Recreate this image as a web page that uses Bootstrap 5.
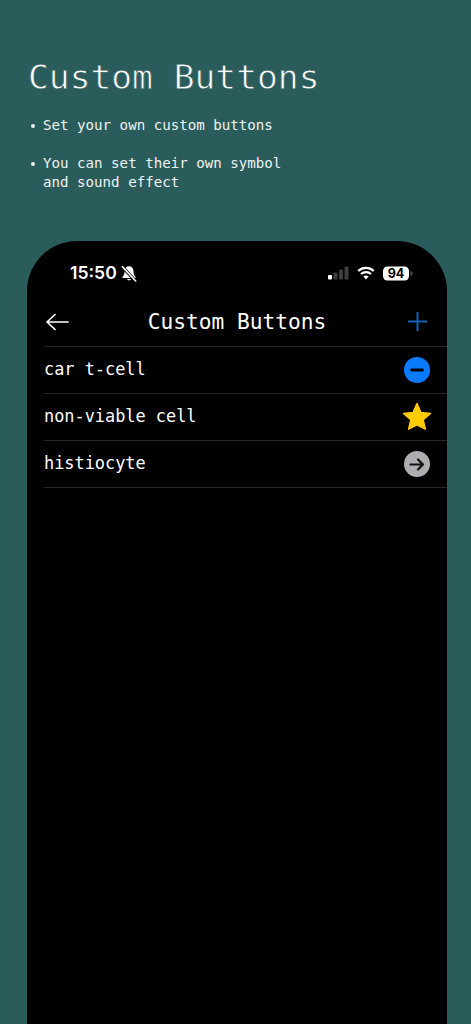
<!DOCTYPE html>
<html lang="en">
<head>
  <meta charset="UTF-8" />
  <title>Custom Buttons</title>
  <link href="https://cdn.jsdelivr.net/npm/bootstrap@5.3.0/dist/css/bootstrap.min.css" rel="stylesheet" />
  <style>
    html, body { height: 1024px; overflow: hidden; }
    body { background: #2b5c5c; color: #fff; font-family: "DejaVu Sans Mono", "Liberation Mono", monospace; }
    .intro { height: 241px; padding: 55px 0 0 28px; }
    .intro-title { font-size: 34.6px; line-height: 44px; font-weight: 400; margin: 0 0 17px; font-family: "DejaVu Sans Mono", monospace; -webkit-text-stroke: 0.8px #2b5c5c; color: #fff; }
    .bullets { list-style: none; margin: 0; padding: 0 0 0 15px; font-size: 14.15px; line-height: 19px; color: #eef3f3; }
    .bullets li { position: relative; margin-bottom: 19px; }
    .bullets li::before { content: ""; position: absolute; left: -12px; top: 8px; width: 4px; height: 4px; border-radius: 50%; background: #eef3f3; }
    .phone { margin: 0 24px 0 27px; height: 783px; background: #000; border-radius: 50px 50px 0 0; }
    .status { height: 58px; padding: 21px 34px 15px 43px; }
    .clock { font-family: Inter, "Liberation Sans", sans-serif; font-weight: 600; font-size: 17.6px; line-height: 22px; }
    .app-bar { height: 47px; padding: 0 20px 2px 19px; }
    .app-title { font-size: 21.2px; line-height: 32px; margin-right: 3px; }
    .rows { margin-left: 17px; border-top: 1px solid #222; }
    .cell-row { height: 47px; padding: 0 17px 1px 0; border-bottom: 1px solid #262626; font-size: 16.9px; }
    .cell-row svg, .app-bar svg, .status svg { display: block; flex: none; }
    .star-icon { margin-right: -2px; }
  </style>
</head>
<body>
  <section class="intro">
    <h1 class="intro-title">Custom Buttons</h1>
    <ul class="bullets">
      <li>Set your own custom buttons</li>
      <li>You can set their own symbol<br />and sound effect</li>
    </ul>
  </section>

  <main class="phone">
    <div class="status d-flex justify-content-between align-items-center">
      <div class="d-flex align-items-center gap-1">
        <span class="clock">15:50</span>
        <svg width="16" height="17" viewBox="0 0 15 16">
          <path d="M7.5 1.2c-2.6 0-4.2 2-4.2 4.4 0 2.6-.6 4.2-2 5.6v1h12.4v-1c-1.4-1.4-2-3-2-5.6 0-2.4-1.600-4.400-4.200-4.400z" fill="#fff"/>
          <path d="M5.600 13.200a2 2 0 0 0 3.800 0z" fill="#fff"/>
          <path d="M1 1.500l12.500 13.500" stroke="#000" stroke-width="3"/>
          <path d="M1.200 1.500l12.600 13.500" stroke="#fff" stroke-width="1.500" stroke-linecap="round"/>
        </svg>
      </div>
      <div class="d-flex align-items-center gap-2">
        <svg width="22" height="14" viewBox="0 0 22 14">
          <rect x="1" y="9" width="4" height="4.500" rx="1" fill="#fff"/>
          <rect x="6.500" y="6.500" width="4" height="7" rx="1" fill="#3d3d3d"/>
          <rect x="12" y="3.500" width="4" height="10" rx="1" fill="#3d3d3d"/>
          <rect x="17.500" y="0.500" width="4" height="13" rx="1" fill="#3d3d3d"/>
        </svg>
        <svg width="18" height="14" viewBox="0 0 18 14" fill="none" stroke="#fff" stroke-width="2.300">
          <path d="M1.200 5a11.500 11.500 0 0 1 15.600 0"/>
          <path d="M4 8a7.500 7.500 0 0 1 10 0"/>
          <path d="M9 13.500l-2.600-2.900a3.800 3.800 0 0 1 5.200 0z" fill="#fff" stroke="none"/>
        </svg>
        <svg width="30" height="15" viewBox="0 0 30 15">
          <rect x="0" y="0.500" width="26" height="14" rx="4.500" fill="#fff"/>
          <path d="M27.500 5.200c1.200.3 2 1.200 2 2.300s-.8 2-2 2.300z" fill="#555"/>
          <text x="13" y="12" text-anchor="middle" font-family="Inter, sans-serif" font-weight="700" font-size="12.500" fill="#000">94</text>
        </svg>
      </div>
    </div>

    <div class="app-bar d-flex justify-content-between align-items-center">
      <svg width="23" height="18" viewBox="0 0 23 18" fill="none" stroke="#fff" stroke-width="1.700" stroke-linecap="round" stroke-linejoin="round">
        <path d="M22 9H1M9 1.500L1 9l8 7.500"/>
      </svg>
      <span class="app-title">Custom Buttons</span>
      <svg width="19" height="19" viewBox="0 0 19 19" fill="none" stroke="#0f62b8" stroke-width="2">
        <path d="M9.500 0v19M0 9.500h19"/>
      </svg>
    </div>

    <div class="rows">
      <div class="cell-row d-flex justify-content-between align-items-center">
        <span>car t-cell</span>
        <svg width="26" height="26" viewBox="0 0 26 26">
          <circle cx="13" cy="13" r="13" fill="#0a7aff"/>
          <path d="M7.500 13h11" stroke="#000" stroke-width="2.800" stroke-linecap="round"/>
        </svg>
      </div>
      <div class="cell-row d-flex justify-content-between align-items-center">
        <span>non-viable cell</span>
        <svg width="30" height="29" viewBox="0 0 30 29" class="star-icon">
          <path d="M15 1.500l3.900 9 9.600.9-7.300 6.400 2.200 9.400L15 22.800l-8.400 4.400 2.200-9.400-7.300-6.400 9.600-.9z" fill="#ffcc00" stroke="#ffcc00" stroke-width="1.500" stroke-linejoin="round"/>
        </svg>
      </div>
      <div class="cell-row d-flex justify-content-between align-items-center">
        <span>histiocyte</span>
        <svg width="26" height="26" viewBox="0 0 26 26" fill="none">
          <circle cx="13" cy="13" r="13" fill="#aeaeb2"/>
          <path d="M6.500 13.500h12.500M14 8.500l5 5-5 5" stroke="#111" stroke-width="2.200" stroke-linecap="round" stroke-linejoin="round"/>
        </svg>
      </div>
    </div>
  </main>
</body>
</html>
